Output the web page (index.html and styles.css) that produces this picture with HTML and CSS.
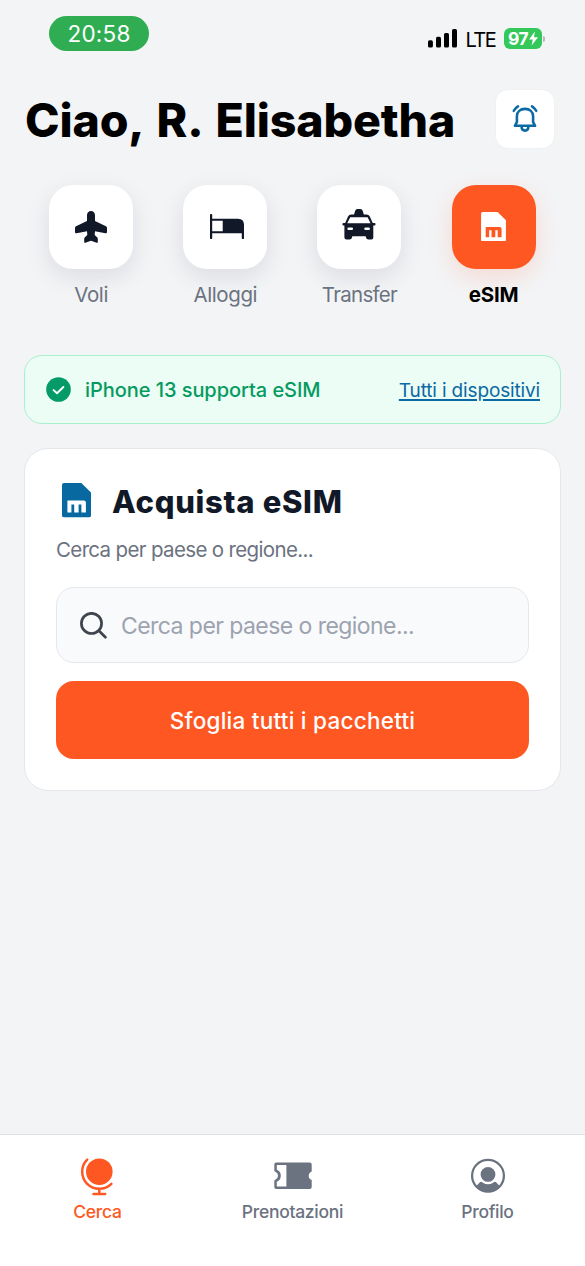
FILE: index.html
```html
<!DOCTYPE html>
<html lang="it">
<head>
<meta charset="utf-8">
<title>eSIM</title>
<link rel="stylesheet" href="styles.css">
</head>
<body>
<svg class="sprite" width="0" height="0" aria-hidden="true">
  <symbol id="sim" viewBox="0 0 29 34.4">
    <path fill="currentColor" fill-rule="evenodd" d="M2 0H19.3L29 9.6V32.4a2 2 0 0 1-2 2H2a2 2 0 0 1-2-2V2a2 2 0 0 1 2-2ZM5.4 17.4V29.4H9.4V21.4H12.2V29.4H16.6V21.4H19.400V29.4H23.9V19.4a2 2 0 0 0-2-2Z"/>
  </symbol>
</svg>
<div class="screen">
  <div class="status">
    <span class="clock"><span class="t-clock">20:58</span></span>
    <div class="signal">
      <svg width="30" height="19" viewBox="0 0 30 19"><rect x="0" y="11.3" width="4.9" height="7.2" rx="1.6"/><rect x="8" y="7.8" width="5" height="10.7" rx="1.6"/><rect x="16" y="4" width="5" height="14.5" rx="1.6"/><rect x="24" y="0" width="5" height="18.5" rx="1.6"/></svg>
      <span class="t-lte">LTE</span>
      <span class="battery"><span class="t-bat">97</span><svg width="9" height="15" viewBox="0 0 9 14"><path fill="#fff" d="M5.9 0 0 8H3.8L2.6 14 9 5.8H5Z"/></svg></span>
      <span class="nub"></span>
    </div>
  </div>

  <header class="header">
    <h1 class="t-title">Ciao, R. Elisabetha</h1>
    <button class="bell" aria-label="Notifiche">
      <svg width="30" height="30" viewBox="0 0 30 30" fill="none" stroke="#0b69a3" stroke-width="2.600" stroke-linecap="round" stroke-linejoin="round"><path d="M4.900 21.800 6.900 18.200V12.200C6.900 7.700 10.400 4.900 15 4.900S23.100 7.700 23.100 12.200V18.200L25.100 21.800Z"/><path d="M11.600 22.300C11.600 28 18.400 28 18.400 22.300"/><path d="M3.800 6.800Q5.200 3.900 8 2.300M26.200 6.800Q24.800 3.900 22 2.300"/></svg>
    </button>
  </header>

  <nav class="services">
    <a class="service"><span class="tile"><svg width="32" height="32" viewBox="0 0 32 32" fill="#111827"><path d="M16 0c2.400 0 4 1.700 4 4.200V10l11 5.300q1 .5 1 1.600V21q0 1.600-1.500 1.200L20 20.200 19.700 24l2.400 2.200q.7.700.7 1.600v3.100q0 1.300-1.200.8L16 29.700l-5.600 2q-1.200.5-1.200-.8v-3.100q0-.9.7-1.600L12.300 24 12 20.200 1.500 22.200Q0 22.600 0 21V16.900q0-1.100 1-1.600L12 10V4.200C12 1.700 13.600 0 16 0Z"/></svg></span><span class="t-voli">Voli</span></a>
    <a class="service"><span class="tile"><svg class="bed" width="34" height="25" viewBox="0 0 34 25" fill="#111827"><path fill-rule="evenodd" d="M1.100 0a1 1 0 0 1 1.100 1V4.700H28q6 0 6 6V24a1 1 0 0 1-2.200 0V19.300H2.200V24A1.100 1.100 0 0 1 0 24V1A1 1 0 0 1 1.100 0ZM2.200 6.800V17.200H12.700V6.800Z"/></svg></span><span class="t-alloggi">Alloggi</span></a>
    <a class="service"><span class="tile"><svg class="taxi" width="34" height="31" viewBox="0 0 34 31" fill="#111827"><path fill-rule="evenodd" d="M13.200 1.800Q13.800 0 15.300 0H18.500Q20 0 20.700 1.800L21.800 5.600H24.500Q26.800 5.600 27.800 7.600L30.700 14H32.500Q33.500 14 33.500 15.200T32.500 16.400H31.300V28.500Q31.300 30.500 29.300 30.500H26.400Q24.400 30.500 24 28.500L23.700 27.300H10.300L10 28.500Q9.600 30.500 7.600 30.500H4.600Q2.400 30.500 2.400 28.500V16.400H1.500Q.4 16.400.4 15.200T1.500 14H3.200L6 7.600Q7 5.600 9.300 5.600H12ZM8.200 8.300 5.200 14.300H28.600L25.600 8.300ZM6.600 18.500a1.200 1.200 0 0 0 0 2.500h3.200a1.200 1.200 0 0 0 0-2.500ZM23.500 18.500a1.200 1.200 0 0 0 0 2.500h3.200a1.200 1.200 0 0 0 0-2.500Z"/></svg></span><span class="t-transfer">Transfer</span></a>
    <a class="service active"><span class="tile"><svg width="25" height="29.500"><use href="#sim"/></svg></span><span class="t-esim">eSIM</span></a>
  </nav>

  <section class="notice">
    <svg width="25" height="25" viewBox="0 0 25 25"><circle cx="12.500" cy="12.500" r="12.300" fill="#059b68"/><path d="M7.600 13.100 11 16.300 17.400 10" fill="none" stroke="#fff" stroke-width="1.900" stroke-linecap="round" stroke-linejoin="round"/></svg>
    <span class="t-support">iPhone 13 supporta eSIM</span>
    <a class="t-devices">Tutti i dispositivi</a>
  </section>

  <section class="card">
    <div class="card-head">
      <svg width="29" height="34.400"><use href="#sim"/></svg>
      <h2 class="t-buy">Acquista eSIM</h2>
    </div>
    <p class="t-sub">Cerca per paese o regione...</p>
    <div class="search">
      <svg width="27" height="27" viewBox="0 0 27 27" fill="none" stroke="#3f444f" stroke-width="2.700" stroke-linecap="round"><circle cx="11.500" cy="11.400" r="10.100"/><path d="M18.900 18.800 25.400 25.300"/></svg>
      <span class="t-ph">Cerca per paese o regione...</span>
    </div>
    <button class="browse"><span class="t-browse">Sfoglia tutti i pacchetti</span></button>
  </section>

  <nav class="tabs">
    <a class="tab current">
      <svg width="39" height="39" viewBox="1 0 39 39"><circle cx="22.300" cy="14.700" r="13.300" fill="#ff5722"/><path d="M10.200 2.600A17.100 17.100 0 1 0 34.400 26.800M22.300 31.800V36.700M16.500 37H28.200" fill="none" stroke="#ff5722" stroke-width="2.500" stroke-linecap="round"/></svg>
      <span class="t-cerca">Cerca</span>
    </a>
    <a class="tab">
      <svg width="38" height="39" viewBox="0 0 38 39"><path fill="#6b7280" fill-rule="evenodd" d="M2 5.400H35.700Q37.700 5.400 37.700 7.400V14.400A4.600 4.600 0 0 0 37.700 23V30Q37.700 32 35.700 32H2.300Q.3 32 .3 30V23.800Q.3 23 1.300 22.700A4.300 4.300 0 0 0 1.300 14.700Q.3 14.300.3 13.600V7.400Q.3 5.400 2 5.400ZM2.800 8V12.700A6.500 6.500 0 0 1 2.800 24.700V29.500H12.400V8Z"/></svg>
      <span class="t-pren">Prenotazioni</span>
    </a>
    <a class="tab">
      <svg width="36" height="39" viewBox="0 0 36 39"><circle cx="18" cy="18.700" r="15.900" fill="none" stroke="#6b7280" stroke-width="2.300"/><circle cx="18" cy="17.400" r="7.400" fill="#6b7280"/><path fill="#6b7280" d="M6 29.500 9.600 25.600Q11 24 12.900 25.700 18 29 23.100 25.700 25 24 26.400 25.600L30 29.500Q25.500 35.200 18 35.200T6 29.500Z"/></svg>
      <span class="t-prof">Profilo</span>
    </a>
  </nav>
</div>
</body>
</html>
```

FILE: styles.css
```css
* { box-sizing: border-box; margin: 0; padding: 0; }
body { font-family: Inter, "Liberation Sans", sans-serif; background: #f3f4f6; color: #000; }
.sprite { position: absolute; }
svg { display: block; flex: none; }
span, h1, h2, p, a { white-space: nowrap; }
button { border: 0; font: inherit; }

.screen { width: 585px; height: 1266px; display: flex; flex-direction: column; overflow: hidden; }

.status { height: 89.500px; display: flex; justify-content: space-between; padding: 16px 40px 0 49px; }
.clock { width: 100px; height: 35px; border-radius: 18px; background: #30ad53; color: #fff; display: flex; align-items: center; justify-content: center; }
.t-clock { font-size: 22.500px; letter-spacing: .2px; line-height: 35px; }
.signal { display: flex; align-items: center; height: 21px; margin-top: 12px; }
.t-lte { font-size: 20px; letter-spacing: -1.400px; margin-left: 7.500px; line-height: 21px; padding-top: 3px; }
.battery { display: flex; align-items: center; justify-content: center; gap: 1px; width: 38px; height: 21px; border-radius: 6px; background: #34c759; color: #fff; margin-left: 8.500px; }
.t-bat { font-size: 17.500px; font-weight: 700; letter-spacing: -.6px; line-height: 21px; }
.nub { width: 2px; height: 6px; margin-left: 1px; border-radius: 0 2px 2px 0; background: #b7b9be; }

.header { height: 59px; display: flex; align-items: center; justify-content: space-between; padding: 0 31px 0 25px; }
.t-title { font-size: 46.500px; font-weight: 800; letter-spacing: -.15px; word-spacing: 4px; line-height: 58px; padding-top: 1px; }
.bell { width: 58px; height: 58px; border-radius: 12px; background: #fff; display: flex; align-items: center; justify-content: center; box-shadow: 0 0 2px rgba(17, 24, 39, .06); }

.services { display: grid; grid-template-columns: repeat(4, 134.200px); padding: 36px 0 0 24px; height: 206.500px; }
.service { display: flex; flex-direction: column; align-items: center; color: #6b7280; line-height: 26px; font-size: 20.500px; }
.tile { width: 84px; height: 84px; border-radius: 24px; background: #fff; display: flex; align-items: center; justify-content: center; margin-bottom: 13px; box-shadow: 0 8px 24px rgba(17, 24, 39, .1); }
.bed { margin-left: 3px; }
.taxi { margin-top: -5px; }
.t-voli, .t-alloggi { letter-spacing: -.4px; }
.t-transfer { letter-spacing: -.7px; }
.active { color: #000; }
.active .tile { background: #ff5722; color: #fff; box-shadow: 0 8px 24px rgba(255, 87, 34, .16); }
.t-esim { font-weight: 700; letter-spacing: -.2px; }

.notice { margin: 0 24px; height: 69px; border: 1.500px solid #a9f0ce; border-radius: 18px; background: #ebfdf5; display: flex; align-items: center; padding: 0 20px 0 21px; }
.t-support { color: #059b60; font-size: 20px; font-weight: 500; letter-spacing: -.06px; margin-left: 14px; padding-top: 1px; }
.t-devices { color: #0b69a3; font-size: 19px; letter-spacing: -.15px; margin-left: auto; text-decoration: underline; text-decoration-thickness: 1.500px; text-underline-offset: 2px; padding-top: 1px; }

.card { margin: 24px 24px 0; height: 343px; border: 1.500px solid #e5e7eb; border-radius: 24px; background: #fff; padding: 33.500px 31px 0; }
.card-head { display: flex; align-items: center; height: 36px; gap: 21px; color: #0868a0; padding-left: 6px; }
.t-buy { color: #111827; font-size: 31px; font-weight: 800; letter-spacing: .7px; line-height: 36px; padding-top: 2px; }
.t-sub { color: #6b7280; font-size: 20.500px; letter-spacing: -.65px; line-height: 26px; margin-top: 18px; }
.search { height: 76px; margin-top: 24.500px; border: 1.500px solid #e5e7eb; border-radius: 18px; background: #f9fafc; display: flex; align-items: center; padding-left: 23px; gap: 14px; }
.t-ph { color: #9ca3af; font-size: 23px; letter-spacing: -.56px; padding-top: 1px; }
.browse { display: flex; align-items: center; justify-content: center; width: 100%; height: 78px; margin-top: 17.500px; border-radius: 18px; background: #ff5722; color: #fff; }
.t-browse { font-size: 22.500px; font-weight: 500; letter-spacing: .25px; padding-top: 2px; }

.tabs { margin-top: auto; height: 132px; border-top: 1px solid #dfe1e5; background: #fff; display: grid; grid-template-columns: repeat(3, 1fr); padding-top: 22px; }
.tab { display: flex; flex-direction: column; align-items: center; gap: 5px; color: #6b7280; font-size: 17.500px; letter-spacing: -.28px; line-height: 22px; font-weight: 500; }
.current { color: #ff5722; }
```
